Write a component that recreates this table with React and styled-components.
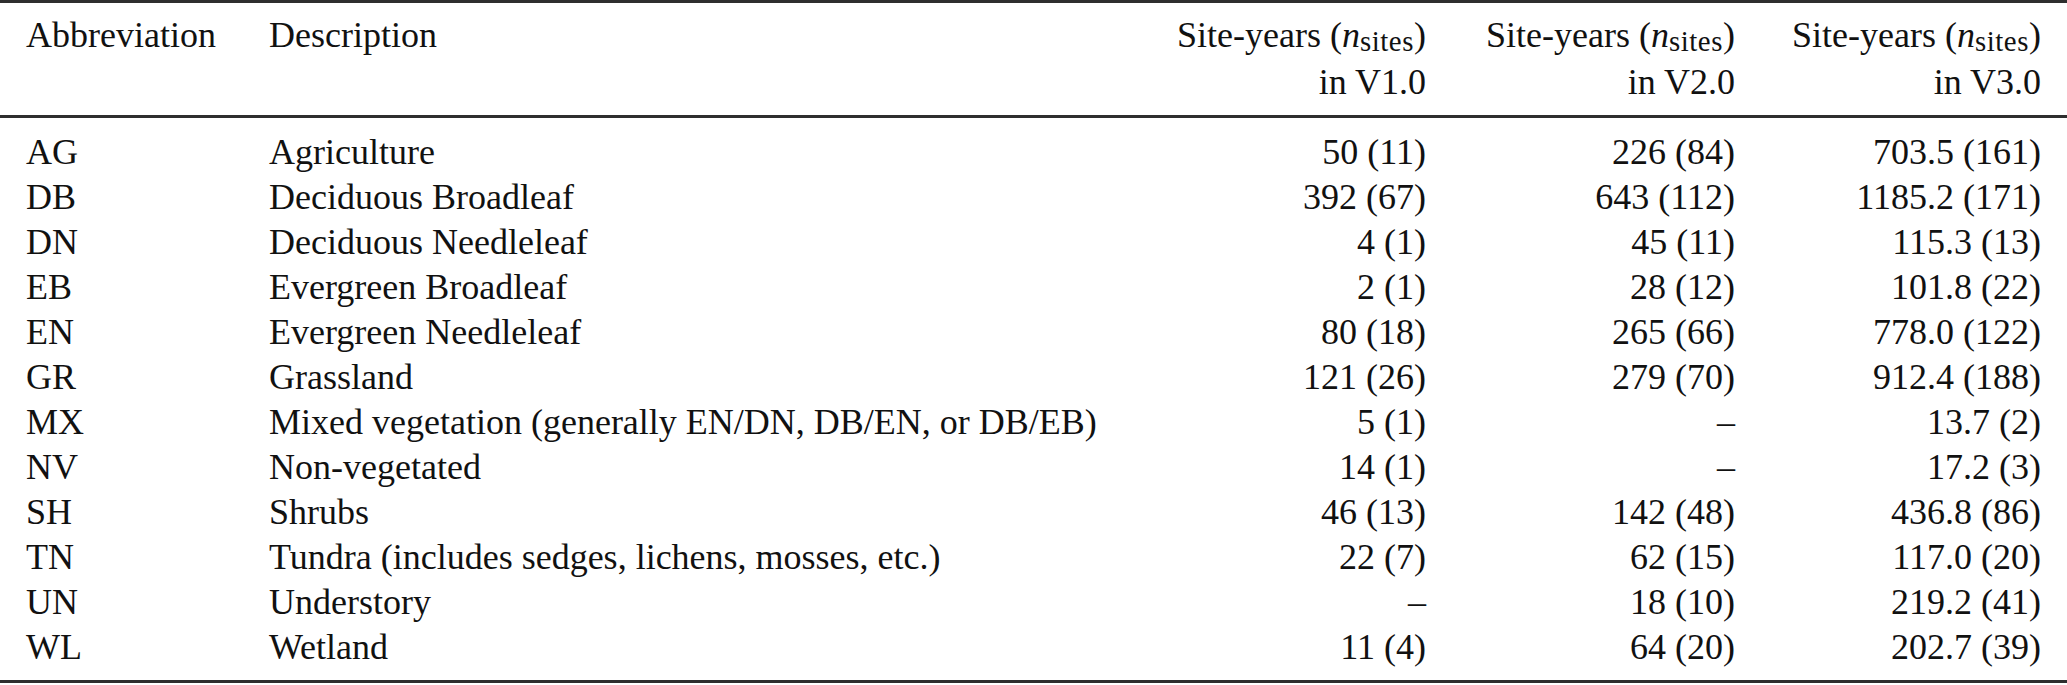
import React from 'react'
import styled, { createGlobalStyle } from 'styled-components'

const GlobalStyle = createGlobalStyle`
  html, body {
    margin: 0;
    padding: 0;
    background: #fff;
  }
  body {
    font-family: 'Liberation Serif', 'Times New Roman', serif;
    color: #111;
  }
`

const rows = [
  ['AG', 'Agriculture', '50 (11)', '226 (84)', '703.5 (161)'],
  ['DB', 'Deciduous Broadleaf', '392 (67)', '643 (112)', '1185.2 (171)'],
  ['DN', 'Deciduous Needleleaf', '4 (1)', '45 (11)', '115.3 (13)'],
  ['EB', 'Evergreen Broadleaf', '2 (1)', '28 (12)', '101.8 (22)'],
  ['EN', 'Evergreen Needleleaf', '80 (18)', '265 (66)', '778.0 (122)'],
  ['GR', 'Grassland', '121 (26)', '279 (70)', '912.4 (188)'],
  ['MX', 'Mixed vegetation (generally EN/DN, DB/EN, or DB/EB)', '5 (1)', '–', '13.7 (2)'],
  ['NV', 'Non-vegetated', '14 (1)', '–', '17.2 (3)'],
  ['SH', 'Shrubs', '46 (13)', '142 (48)', '436.8 (86)'],
  ['TN', 'Tundra (includes sedges, lichens, mosses, etc.)', '22 (7)', '62 (15)', '117.0 (20)'],
  ['UN', 'Understory', '–', '18 (10)', '219.2 (41)'],
  ['WL', 'Wetland', '11 (4)', '64 (20)', '202.7 (39)'],
]

const versions = ['V1.0', 'V2.0', 'V3.0']

const Table = styled.div`
  width: 2067px;
  border-top: 3px solid #2e2e2e;
  border-bottom: 3px solid #2e2e2e;
  font-size: 36px;
`

const Grid = styled.div`
  display: grid;
  grid-template-columns: 243px 1fr 309px 309px 306px;
  padding: 0 26px;
`

const Head = styled(Grid)`
  padding-top: 9px;
  padding-bottom: 9px;
  line-height: 47px;
  border-bottom: 3px solid #2e2e2e;
`

const Body = styled(Grid)`
  padding-top: 12px;
  padding-bottom: 10px;
  line-height: 45px;
`

const Cell = styled.div`
  text-align: ${(p) => (p.$num ? 'right' : 'left')};
  white-space: nowrap;
`

const Italic = styled.i`
  font-style: italic;
`

const Sub = styled.sub`
  font-size: 0.8em;
  letter-spacing: 0.02em;
  vertical-align: -0.15em;
  line-height: 0;
`

const App = () => {
  return (
    <>
      <GlobalStyle />
      <Table>
        <Head>
          <Cell>Abbreviation</Cell>
          <Cell>Description</Cell>
          {versions.map((v) => (
            <Cell $num key={v}>
              Site-years (<Italic>n</Italic>
              <Sub>sites</Sub>)
              <br />
              in {v}
            </Cell>
          ))}
        </Head>
        <Body>
          {rows.map((row) =>
            row.map((val, i) => (
              <Cell $num={i > 1} key={row[0] + i}>
                {val}
              </Cell>
            ))
          )}
        </Body>
      </Table>
    </>
  )
}

export default App
